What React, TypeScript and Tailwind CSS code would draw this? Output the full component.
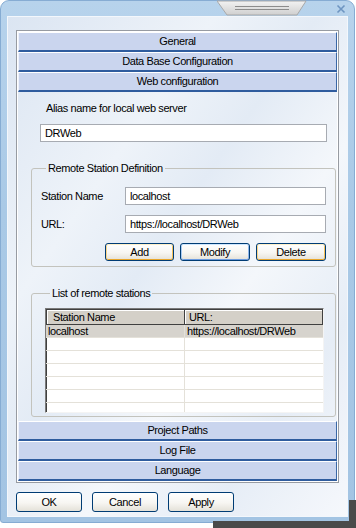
import clsx from "clsx";

const bars = {
  top: ["General", "Data Base Configuration", "Web configuration"],
  bottom: ["Project Paths", "Log File", "Language"],
};

const stations = [{ name: "localhost", url: "https://localhost/DRWeb" }];

function Bar({ title }: { title: string }) {
  return (
    <div className="flex h-[20px] items-center justify-center border-t border-l border-r border-b-2 border-t-white border-l-[#eef2fb] border-r-[#3a67a6] border-b-[#2f5c9e] bg-[#cad5ee]">
      {title}
    </div>
  );
}

function Field({ value, className }: { value: string; className?: string }) {
  return (
    <div
      className={clsx(
        "flex h-[18px] items-center border border-[#a7abb2] bg-white px-[4px] leading-none",
        className,
      )}
    >
      {value}
    </div>
  );
}

type Tone = "hot" | "focus" | undefined;

function XpButton({ label, tone, className }: { label: string; tone?: Tone; className?: string }) {
  return (
    <button
      className={clsx(
        "flex items-center justify-center rounded-[3px] border border-[#003c74] bg-[linear-gradient(#ffffff,#f7f6f2_55%,#e4e1d8)] leading-none text-black",
        tone === "hot" &&
          "shadow-[inset_0_1px_0_#fff0c8,inset_1px_0_0_#fad58a,inset_-1px_0_0_#f6c25a,inset_0_-1px_0_#e9a629]",
        tone === "focus" &&
          "shadow-[inset_0_1px_0_#cee7ff,inset_1px_0_0_#a9caf1,inset_-1px_0_0_#8fb5ea,inset_0_-1px_0_#6b9be0]",
        className,
      )}
    >
      {label}
    </button>
  );
}

function Group({ title, children, className }: { title: string; children: React.ReactNode; className?: string }) {
  return (
    <fieldset className={clsx("rounded-[3px] border border-[#c3c3bd]", className)}>
      <legend className="ml-[5px] px-[2px] leading-[13px]">{title}</legend>
      {children}
    </fieldset>
  );
}

function StationTable() {
  const rows = Array.from({ length: 7 }, (_, i) => stations[i]);
  return (
    <div className="h-[105px] overflow-hidden border border-t-[#7a7a7a] border-l-[#7a7a7a] border-r-[#f4f4f4] border-b-[#f4f4f4] bg-white shadow-[inset_1px_1px_0_#404040]">
      <div className="flex h-[16px] pl-[1px] pt-[1px]">
        <div className="flex w-[138px] items-center border-r border-b border-r-[#404040] border-b-[#404040] bg-[#d4d0c8] pl-[6px] shadow-[inset_1px_1px_0_#fff]">
          Station Name
        </div>
        <div className="flex flex-1 items-center border-r border-b border-r-[#404040] border-b-[#404040] bg-[#d4d0c8] pl-[4px] shadow-[inset_1px_1px_0_#fff]">
          URL:
        </div>
      </div>
      {rows.map((row, i) => (
        <div
          key={i}
          className={clsx(
            "flex h-[13px] border-b border-[#e4e1d9] pl-[1px] leading-[12px]",
            row && "bg-[#d6d3cd]",
          )}
        >
          <div className="w-[138px] border-r border-[#e4e1d9] pl-[1px]">{row?.name}</div>
          <div className="flex-1 pl-[2px]">{row?.url}</div>
        </div>
      ))}
    </div>
  );
}

export default function App() {
  return (
    <div className="relative h-[528px] w-[356px] overflow-hidden bg-white font-['Liberation_Sans',Arial,sans-serif] text-[11px] tracking-[-0.4px] text-black">
      <div className="flex h-[523px] w-[355px] flex-col rounded-t-[9px] rounded-bl-[3px] border border-[#86acd3] bg-[linear-gradient(180deg,#b7d3ec,#a9c9e6_40%,#a3c4e3)] px-[6px] pt-[15px] pb-[5px]">
        <div className="flex flex-1 flex-col border border-[#f3f7fc] bg-[linear-gradient(125deg,#dbe5f2_0%,#eef3f9_30%,#e3ebf5_45%,#f4f7fb_62%,#e6edf6_80%,#f6f8fc_100%)] px-[8px] pt-[13px] pb-[4px]">
          <div className="flex flex-1 flex-col border border-[#979ba2] p-[1px] shadow-[inset_0_0_0_1px_#ffffff]">
            {bars.top.map((t) => (
              <Bar key={t} title={t} />
            ))}

            <div className="flex flex-1 flex-col pl-[13px] pr-[1px]">
              <div className="ml-[15px] mt-[10px] leading-[13px]">Alias name for local web server</div>
              <Field value="DRWeb" className="ml-[9px] mr-[9px] mt-[9px]" />

              <Group title="Remote Station Definition" className="mt-[20px] px-[9px] pt-[12px] pb-[5px]">
                <div className="flex items-center">
                  <span className="w-[84px]">Station Name</span>
                  <Field value="localhost" className="flex-1" />
                </div>
                <div className="mt-[10px] flex items-center">
                  <span className="w-[84px]">URL:</span>
                  <Field value="https://localhost/DRWeb" className="flex-1" />
                </div>
                <div className="mt-[10px] flex justify-end gap-[6px]">
                  <XpButton label="Add" tone="hot" className="h-[18px] w-[69px]" />
                  <XpButton label="Modify" tone="focus" className="h-[18px] w-[70px]" />
                  <XpButton label="Delete" tone="hot" className="h-[18px] w-[70px]" />
                </div>
              </Group>

              <Group title="List of remote stations" className="mt-[20px] pl-[13px] pr-[11px] pt-[8px] pb-[3px]">
                <StationTable />
              </Group>
            </div>

            {bars.bottom.map((t) => (
              <Bar key={t} title={t} />
            ))}
          </div>

          <div className="mt-[9px] flex gap-[10px]">
            <XpButton label="OK" className="h-[20px] w-[66px]" />
            <XpButton label="Cancel" className="h-[20px] w-[66px]" />
            <XpButton label="Apply" className="h-[20px] w-[66px]" />
          </div>
        </div>
      </div>

      {/* caption grip */}
      <svg className="absolute left-[217px] top-0" width="90" height="16" viewBox="0 0 90 16">
        <defs>
          <linearGradient id="grip" x1="0" y1="0" x2="0" y2="1">
            <stop offset="0" stopColor="#f2f2f2" />
            <stop offset="1" stopColor="#cfcfcf" />
          </linearGradient>
        </defs>
        <polygon points="0,1 89,1 80,15 10,15" fill="url(#grip)" stroke="#a9a9a9" />
        <line x1="18" y1="6.5" x2="72" y2="6.5" stroke="#8c8c8c" />
        <line x1="18" y1="9.5" x2="72" y2="9.5" stroke="#8c8c8c" />
      </svg>

      {/* close glyph */}
      <svg className="absolute left-[336px] top-[4px]" width="10" height="10" viewBox="0 0 10 10">
        <path d="M1.5 1.5 L8.5 8.5 M8.5 1.5 L1.5 8.5" stroke="#6e95c1" strokeWidth="1.6" />
      </svg>

      {/* drop shadow of the window beneath */}
      <div className="absolute left-[349px] top-[500px] h-[28px] w-[7px] bg-[#4a4a4a]" />
      <div className="absolute left-[213px] top-[521px] h-[7px] w-[143px] bg-[#4a4a4a]" />
    </div>
  );
}
